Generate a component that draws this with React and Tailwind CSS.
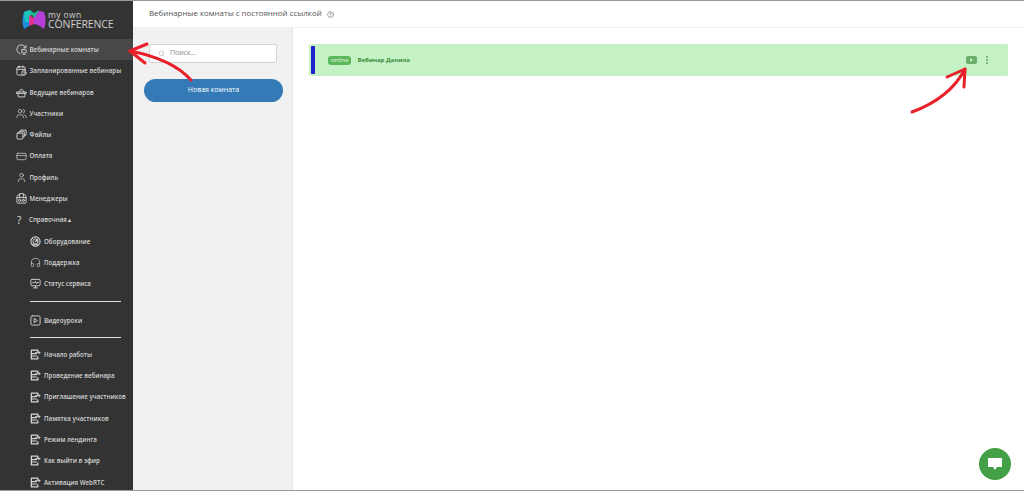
import React from "react";
import { CircleHelp, Headphones, Search, Users, CreditCard, User } from "lucide-react";

// small hand-drawn icons for what the package lacks
const Svg = ({ children }) => (
  <svg width="11" height="11" viewBox="0 0 12 12" fill="none" stroke="#d6d6d6" strokeWidth="1" strokeLinecap="round" strokeLinejoin="round" className="shrink-0">
    {children}
  </svg>
);

const RoomIcon = () => (
  <Svg>
    <path d="M10.5 4 A5 5 0 1 0 4.5 10.7" />
    <path d="M10.8 1.8 V4.2 H8.4" />
    <rect x="6.2" y="6.2" width="5" height="3.4" rx="0.6" />
    <path d="M7.5 11.2 H10" />
  </Svg>
);
const PlanIcon = () => (
  <Svg>
    <rect x="1" y="2" width="9" height="9" rx="1.5" />
    <path d="M1 4.8 H10 M3.5 1 V3 M7.5 1 V3" />
    <circle cx="8.6" cy="8.6" r="2.4" fill="#333" />
    <path d="M8.6 7.6 V8.7 H9.5" />
  </Svg>
);
const BasketIcon = () => (
  <Svg>
    <path d="M0.8 5.5 H11.2 V7 H0.8Z" />
    <path d="M2 7 L2.6 10.8 H9.4 L10 7" />
    <path d="M3 5.5 L6 2 L9 5.5" />
  </Svg>
);
const FilesIcon = () => (
  <Svg>
    <rect x="1" y="4.5" width="6.5" height="6.5" rx="1" />
    <path d="M3 4.5 V3 H9 V8.5 H7.5" />
    <path d="M5 3 V1.2 H11 V6.8 H9" />
  </Svg>
);
const ManagerIcon = () => (
  <Svg>
    <path d="M1 5 A5 4.5 0 0 1 11 5 V10 A1 1 0 0 1 10 11 H2 A1 1 0 0 1 1 10Z" />
    <path d="M1 5 H11 M4 1.2 V5 M8 1.2 V5" />
    <circle cx="4" cy="8" r="1.2" />
    <circle cx="8" cy="8" r="1.2" />
  </Svg>
);
const GaugeIcon = () => (
  <Svg>
    <circle cx="6" cy="6" r="5" strokeWidth="1.2" />
    <circle cx="6" cy="6" r="2.8" />
    <path d="M6 6 L8.4 3.4" strokeWidth="1.3" />
    <path d="M3 9 H9" />
  </Svg>
);
const StatusIcon = () => (
  <Svg>
    <rect x="1" y="1.5" width="10" height="7" rx="1.2" />
    <path d="M3 5 H5 L6 3.5 L7 6 L7.6 5 H9" />
    <path d="M6 8.5 V10.5 M4 10.8 H8" />
  </Svg>
);
const VideoIcon = () => (
  <Svg>
    <rect x="1" y="1" width="10" height="10" rx="1.5" />
    <path d="M4.8 4 L8 6 L4.8 8Z" />
  </Svg>
);
const DocIcon = () => (
  <Svg>
    <path d="M8.5 3.5 V1.2 H1.5 V10.8 H8.5 V8.5" strokeWidth="1.4" />
    <path d="M1.5 5 H7 M1.5 7.6 H7" strokeWidth="1.2" />
    <path d="M6 4 H11 M9.5 2.8 L11 4 L9.5 5.2" />
  </Svg>
);
const wrap = (Icon) => () => <Icon size={11} strokeWidth={1.5} className="text-[#d6d6d6] shrink-0" />;

const mainItems = [
  { label: "Вебинарные комнаты", icon: RoomIcon, active: true },
  { label: "Запланированные вебинары", icon: PlanIcon },
  { label: "Ведущие вебинаров", icon: BasketIcon },
  { label: "Участники", icon: wrap(Users) },
  { label: "Файлы", icon: FilesIcon },
  { label: "Оплата", icon: wrap(CreditCard) },
  { label: "Профиль", icon: wrap(User) },
  { label: "Менеджеры", icon: ManagerIcon },
];

const helpItems = [
  { label: "Оборудование", icon: GaugeIcon },
  { label: "Поддержка", icon: wrap(Headphones) },
  { label: "Статус сервиса", icon: StatusIcon },
];

const docs = [
  "Начало работы",
  "Проведение вебинара",
  "Приглашение участников",
  "Памятка участников",
  "Режим лендинга",
  "Как выйти в эфир",
  "Активация WebRTC",
];

function NavItem({ label, icon: Icon, active, sub }) {
  return (
    <div className={`flex items-center h-[21.3px] ${sub ? "pl-[30px]" : "pl-[15.5px]"} ${active ? "bg-[#484848]" : ""}`}>
      <Icon />
      <span className="ml-[3px] text-[6.2px] font-semibold text-[#d4d4d4] whitespace-nowrap">{label}</span>
    </div>
  );
}

function Logo() {
  return (
    <div className="flex items-start h-[38px] pl-[21px] pt-[8px]">
      <svg width="26" height="21" viewBox="0 0 26 21" className="shrink-0">
        <path d="M3 3 L9 1 L12 5 L8 7 L8 17 L3 20 Q0 12 3 3Z" fill="#1e8fe0" />
        <path d="M3 3 L9 1 L11 4 L8 13 L4 13Z" fill="#19c4b8" />
        <path d="M9 1 L13 4 L18 1 L17 6 L13 9 L10 5Z" fill="#1fb58a" />
        <path d="M8 6 L13 9 L13 15 L8 17Z" fill="#e0338f" />
        <path d="M13 9 L18 2 L23 3 Q26 12 23 20 L17 16 L13 15Z" fill="#b63fd8" />
      </svg>
      <div className="ml-[1px] text-[#cfcfcf]">
        <div className="text-[8.5px] leading-[8px] mt-[2px] tracking-[0.4px]">my own</div>
        <div className="text-[10.5px] leading-[11px] tracking-[-0.1px]">CONFERENCE</div>
      </div>
    </div>
  );
}

function Arrows() {
  return (
    <svg width="1024" height="491" viewBox="0 0 1024 491" className="absolute inset-0 pointer-events-none">
      <g fill="none" stroke="#e8202a" strokeWidth="3" strokeLinecap="round" strokeLinejoin="round">
        <path d="M191 79 Q172 58 130 50" />
        <path d="M147 43 L130 50 L145 62" />
        <path d="M912 111 Q950 97 965 68" />
        <path d="M947 76 L965 68 L964 86" />
      </g>
    </svg>
  );
}

export default function App() {
  return (
    <div className="relative w-[1024px] h-[491px] overflow-hidden bg-white font-['Open_Sans','Noto_Sans',sans-serif] border-t border-b border-[#999]">
      <div className="flex h-full">
        {/* Sidebar */}
        <div className="w-[133px] h-full bg-[#333333] shrink-0 overflow-hidden">
          <Logo />
          {mainItems.map((item) => (
            <NavItem key={item.label} {...item} />
          ))}
          <div className="flex items-center h-[21.3px] pl-[17px]">
            <span className="w-[9px] text-[10px] text-[#e0e0e0] leading-none">?</span>
            <span className="ml-[3px] text-[6.2px] font-semibold text-[#d4d4d4]">Справочная ▴</span>
          </div>
          {helpItems.map((item) => (
            <NavItem key={item.label} {...item} sub />
          ))}
          <div className="h-[1px] bg-[#e0e0e0] ml-[30px] w-[91px] mt-[6px] mb-[8px]" />
          <NavItem label="Видеоуроки" icon={VideoIcon} sub />
          <div className="h-[1px] bg-[#e0e0e0] ml-[30px] w-[91px] mt-[6px] mb-[6px]" />
          {docs.map((d) => (
            <NavItem key={d} label={d} icon={DocIcon} sub />
          ))}
        </div>

        {/* Content */}
        <div className="flex-1 flex flex-col min-w-0">
          <div className="h-[27px] shrink-0 flex items-center pl-[16px] border-b border-[#efefef] text-[7.9px] text-[#555]">
            Вебинарные комнаты с постоянной ссылкой
            <CircleHelp size={7} className="ml-[5px] text-[#666]" />
          </div>
          <div className="flex flex-1 min-h-0">
            <div className="w-[160px] shrink-0 bg-[#f1f1f1] border-r border-[#e6e6e6] pt-[16px] px-[11px]">
              <div className="flex items-center h-[19px] w-[128px] ml-[5px] bg-white border border-[#d4d4d4] rounded-[2px] pl-[8px]">
                <Search size={7} className="text-[#aaa]" />
                <span className="ml-[5px] text-[7px] text-[#888]">Поиск...</span>
              </div>
              <div className="flex items-center justify-center h-[23px] w-[139px] mt-[16px] rounded-full bg-[#337ab7] text-white text-[7px] font-medium">
                Новая комната
              </div>
            </div>
            <div className="flex-1 pt-[16px] px-[16px]">
              <div className="flex items-center h-[32px] bg-[#c5f2c5] rounded-[2px] pl-[2px] pr-[20px]">
                <div className="w-[4px] h-[28px] bg-[#2222cc] rounded-[1px]" />
                <div className="ml-[13px] px-[3px] h-[9px] flex items-center bg-[#5cb85c] rounded-[3px] text-[6px] text-[#e8f8e8] leading-none">online</div>
                <span className="ml-[6px] text-[6px] font-bold text-[#3c8a3c]">Вебинар Данила</span>
                <div className="ml-auto flex items-center gap-[9px]">
                  <div className="w-[11px] h-[8px] bg-[#6aaf6a] rounded-[2px] flex items-center justify-center">
                    <div className="w-0 h-0 border-y-[2px] border-y-transparent border-l-[3px] border-l-[#c5f2c5]" />
                  </div>
                  <div className="flex flex-col gap-[1px]">
                    <div className="w-[2px] h-[2px] rounded-full bg-[#6f9f6f]" />
                    <div className="w-[2px] h-[2px] rounded-full bg-[#6f9f6f]" />
                    <div className="w-[2px] h-[2px] rounded-full bg-[#6f9f6f]" />
                  </div>
                </div>
              </div>
            </div>
          </div>
        </div>
      </div>

      <Arrows />

      {/* Chat button */}
      <div className="absolute left-[979px] top-[447px] w-[32px] h-[32px] rounded-full bg-[#43a047] flex items-center justify-center">
        <svg width="16" height="14" viewBox="0 0 16 14">
          <path d="M1 1 H15 V10 H10 L8 13 L6 10 H1Z" fill="#fff" />
        </svg>
      </div>
    </div>
  );
}
